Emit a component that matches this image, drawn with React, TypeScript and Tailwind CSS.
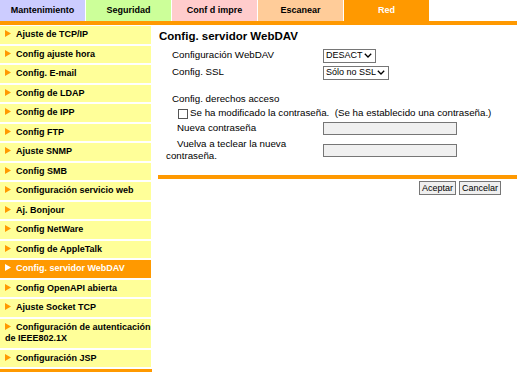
import React from "react";

const tabs = [
  { label: "Mantenimiento", bg: "bg-[#ccccff]", text: "text-black" },
  { label: "Seguridad", bg: "bg-[#ccff99]", text: "text-black" },
  { label: "Conf d impre", bg: "bg-[#ffcccc]", text: "text-black" },
  { label: "Escanear", bg: "bg-[#ffcc99]", text: "text-black" },
  { label: "Red", bg: "bg-[#ff9900]", text: "text-white" },
];

const menu = [
  "Ajuste de TCP/IP",
  "Config ajuste hora",
  "Config. E-mail",
  "Config de LDAP",
  "Config de IPP",
  "Config FTP",
  "Ajuste SNMP",
  "Config SMB",
  "Configuración servicio web",
  "Aj. Bonjour",
  "Config NetWare",
  "Config de AppleTalk",
  "Config. servidor WebDAV",
  "Config OpenAPI abierta",
  "Ajuste Socket TCP",
  "Configuración de autenticación de IEEE802.1X",
  "Configuración JSP",
];

function Arrow({ white }: { white?: boolean }) {
  return (
    <svg width="6" height="7" viewBox="0 0 6 7" className="inline-block mr-[5px] align-[0px]">
      <path d="M0 0 L6 3.5 L0 7 Z" fill={white ? "#ffffff" : "#ff9900"} />
    </svg>
  );
}

function Select({ value, width }: { value: string; width: string }) {
  return (
    <div className={`flex items-center justify-between h-[14px] border border-[#767676] bg-white pl-[2px] pr-[3px] text-[9px] leading-none ${width}`}>
      <span>{value}</span>
      <svg width="8" height="5" viewBox="0 0 8 5">
        <path d="M0.8 0.8 L4 4 L7.2 0.8" stroke="#000" strokeWidth="1.3" fill="none" />
      </svg>
    </div>
  );
}

export default function App() {
  return (
    <div className="w-[517px] h-[386px] bg-white text-black font-['Liberation_Sans',Arial,sans-serif] overflow-hidden">
      {/* Tabs */}
      <div className="flex h-[21px]">
        {tabs.map((t) => (
          <div
            key={t.label}
            className={`w-[85px] mr-px flex items-center justify-center text-[9px] font-bold ${t.bg} ${t.text}`}
          >
            {t.label}
          </div>
        ))}
      </div>
      <div className="h-[4px] bg-[#ff9900]" />

      <div className="flex mt-[1px]">
        {/* Sidebar */}
        <div className="w-[152px] shrink-0">
          {menu.map((m) => {
            const active = m === "Config. servidor WebDAV";
            return (
              <div
                key={m}
                className={`w-[151px] mb-[2px] pl-[5px] pr-0 py-[3px] min-h-[17.5px] text-[9px] font-bold leading-[11.5px] ${
                  active ? "bg-[#ff9900] text-white" : "bg-[#ffff99] text-black"
                }`}
              >
                <Arrow white={active} />
                {m}
              </div>
            );
          })}
          <div className="h-[3px] bg-[#ff9900] mt-[1px]" />
        </div>

        {/* Content */}
        <div className="flex-1 pl-[7px] pt-[2px] text-[9.75px]">
          <div className="text-[11.5px] font-bold leading-[16px]">Config. servidor WebDAV</div>
          <div className="pl-[13px] mt-[3px]">
            <div className="flex items-center h-[17px]">
              <span className="w-[151px]">Configuración WebDAV</span>
              <Select value="DESACT" width="w-[53px]" />
            </div>
            <div className="flex items-center h-[17px]">
              <span className="w-[151px]">Config. SSL</span>
              <Select value="Sólo no SSL" width="w-[66px]" />
            </div>
            <div className="mt-[11px] h-[14px] leading-[14px]">Config. derechos acceso</div>
            <div className="flex items-center h-[15px] pl-[6px] whitespace-nowrap">
              <span className="w-[10px] h-[10px] border border-[#555] mr-[2px]" />
              <span>Se ha modificado la contraseña.&nbsp; (Se ha establecido una contraseña.)</span>
            </div>
            <div className="flex items-center h-[15px]">
              <span className="w-[151px] pl-[5px]">Nueva contraseña</span>
              <div className="w-[134px] h-[13px] border border-[#767676] bg-[#f0f0f0]" />
            </div>
            <div className="flex items-center -ml-[6px] mt-[2px]">
              <span className="w-[157px] leading-[12px]">
                <span className="pl-[11px]">Vuelva a teclear la nueva</span>
                <br />
                contraseña.
              </span>
              <div className="w-[134px] h-[13px] border border-[#767676] bg-[#f0f0f0]" />
            </div>
          </div>
          <div className="h-[4px] bg-[#ff9900] -ml-[1px] mt-[13px]" />
          <div className="flex justify-end gap-[3px] pr-[16px] mt-[2px]">
            <button className="h-[14px] px-[2px] border border-[#767676] bg-[#efefef] text-[9px] leading-none">
              Aceptar
            </button>
            <button className="h-[14px] px-[2px] border border-[#767676] bg-[#efefef] text-[9px] leading-none">
              Cancelar
            </button>
          </div>
        </div>
      </div>
    </div>
  );
}
